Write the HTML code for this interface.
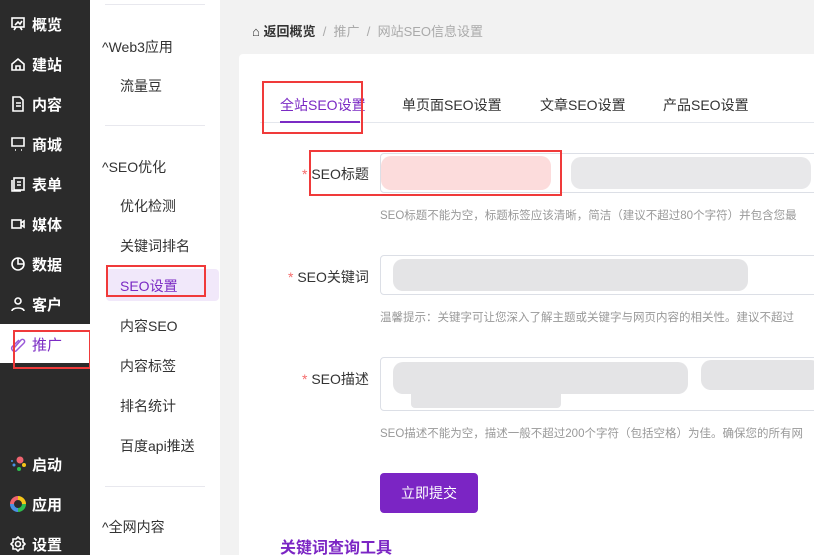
<!DOCTYPE html>
<html><head><meta charset="utf-8"><style>
*{margin:0;padding:0;box-sizing:border-box}
html,body{width:814px;height:555px;overflow:hidden}
body{background:#f2f2f2;font-family:"Liberation Sans","Noto Sans CJK SC",sans-serif;position:relative}
.side{position:absolute;left:0;top:0;width:90px;height:555px;background:#2b2b2b}
.si{position:absolute;left:10px;height:20px;color:#fff;font-size:15px;font-weight:bold;display:flex;align-items:center;gap:6px}
.si svg{width:16px;height:16px}
.act{position:absolute;left:0;top:324px;width:90px;height:39px;background:#fff}
.sub{position:absolute;left:90px;top:0;width:130px;height:555px;background:#fff}
.sh{position:absolute;left:12px;font-size:14px;color:#333}
.sl{position:absolute;left:30px;font-size:14px;color:#333}
.hr{position:absolute;left:15px;width:100px;height:1px;background:#e8e8ee}
.red{position:absolute;border:2px solid #f03a3a}
.card{position:absolute;left:239px;top:54px;width:580px;height:510px;background:#fff;border-radius:4px}
.a{position:absolute;font-size:14px;color:#333}
.ph{position:absolute;font-size:11.5px;color:#999;white-space:nowrap}
.inp{position:absolute;left:380px;width:440px;border:1px solid #dcdfe6;border-radius:4px;background:#fff;overflow:hidden}
.bl{position:absolute;background:#e4e4e6;border-radius:10px}
</style></head><body>
<div class="side">
 <div class="act"></div>
 <div class="si" style="top:14px"><svg viewBox="0 0 16 16" fill="none" stroke="#fff" stroke-width="1.6"><rect x="2" y="2" width="12" height="9"/><path d="M4 14l2-3M12 14l-2-3M5 9l3-3 2 2 2-3"/></svg>概览</div>
 <div class="si" style="top:54px"><svg viewBox="0 0 16 16" fill="none" stroke="#fff" stroke-width="1.6"><path d="M2 8l6-5 6 5v6H2z"/><path d="M6 14v-4h4v4"/></svg>建站</div>
 <div class="si" style="top:94px"><svg viewBox="0 0 16 16" fill="none" stroke="#fff" stroke-width="1.6"><path d="M3 1h7l3 3v11H3z"/><path d="M6 7h5M6 10h5"/></svg>内容</div>
 <div class="si" style="top:134px"><svg viewBox="0 0 16 16" fill="none" stroke="#fff" stroke-width="1.6"><path d="M2 2h12v8H2zM5 14h1M11 14h1"/></svg>商城</div>
 <div class="si" style="top:174px"><svg viewBox="0 0 16 16" fill="none" stroke="#fff" stroke-width="1.6"><rect x="4" y="2" width="10" height="12"/><path d="M2 4v11h9M7 6h4M7 9h4"/></svg>表单</div>
 <div class="si" style="top:214px"><svg viewBox="0 0 16 16" fill="none" stroke="#fff" stroke-width="1.6"><rect x="2" y="4" width="9" height="8"/><path d="M11 7l3-2v6l-3-2"/></svg>媒体</div>
 <div class="si" style="top:254px"><svg viewBox="0 0 16 16" fill="none" stroke="#fff" stroke-width="1.6"><circle cx="8" cy="8" r="6"/><path d="M8 2v6h6"/></svg>数据</div>
 <div class="si" style="top:294px"><svg viewBox="0 0 16 16" fill="none" stroke="#fff" stroke-width="1.6"><circle cx="8" cy="5" r="3"/><path d="M2 15c0-4 12-4 12 0"/></svg>客户</div>
 <div class="si" style="top:334px;color:#7b2bc4;font-weight:normal"><svg viewBox="0 0 16 16" fill="none" stroke="#9a5ad8" stroke-width="1.5"><path d="M4 12l7-8a2 2 0 013 3l-8 8a3 3 0 01-4-4l7-7"/></svg>推广</div>
 <div class="si" style="top:454px"><svg viewBox="0 0 16 16"><circle cx="10" cy="4" r="3.5" fill="#f06470"/><circle cx="14" cy="9" r="2" fill="#f5c518"/><circle cx="9" cy="13" r="2" fill="#2ebd4e"/><circle cx="4" cy="9" r="1.5" fill="#4a90e2"/><circle cx="2" cy="5" r="1" fill="#4a90e2"/></svg>启动</div>
 <div class="si" style="top:494px"><svg viewBox="0 0 16 16" fill="none" stroke-width="4"><path d="M2 8a6 6 0 016-6" stroke="#f06470"/><path d="M8 2a6 6 0 016 6" stroke="#f5c518"/><path d="M14 8a6 6 0 01-6 6" stroke="#2ebd4e"/><path d="M8 14a6 6 0 01-6-6" stroke="#4a90e2"/></svg>应用</div>
 <div class="si" style="top:534px"><svg viewBox="0 0 16 16" fill="none" stroke="#fff" stroke-width="1.6"><circle cx="8" cy="8" r="2.5"/><path d="M8 1l2 2 3 0 0 3 2 2-2 2 0 3-3 0-2 2-2-2-3 0 0-3-2-2 2-2 0-3 3 0z"/></svg>设置</div>
</div>
<div class="red" style="left:13px;top:330px;width:78px;height:39px"></div>
<div class="sub">
 <div class="hr" style="top:4px"></div>
 <div class="sh" style="top:37px">^Web3应用</div>
 <div class="sl" style="top:76px">流量豆</div>
 <div class="hr" style="top:125px"></div>
 <div class="sh" style="top:157px">^SEO优化</div>
 <div class="sl" style="top:196px">优化检测</div>
 <div class="sl" style="top:236px">关键词排名</div>
 <div style="position:absolute;left:16px;top:269px;width:113px;height:32px;background:#f1e8fa;border-radius:4px"></div>
 <div class="sl" style="top:276px;color:#7b2bc4">SEO设置</div>
 <div class="sl" style="top:316px">内容SEO</div>
 <div class="sl" style="top:356px">内容标签</div>
 <div class="sl" style="top:396px">排名统计</div>
 <div class="sl" style="top:436px">百度api推送</div>
 <div class="hr" style="top:486px"></div>
 <div class="sh" style="top:517px">^全网内容</div>
</div>
<div class="red" style="left:106px;top:265px;width:100px;height:32px"></div>
<div style="position:absolute;left:252px;top:21px;font-size:13px;color:#333;font-weight:bold">⌂ 返回概览 <span style="color:#aaa;font-weight:normal">&nbsp;/&nbsp; 推广 &nbsp;/&nbsp; 网站SEO信息设置</span></div>
<div class="card"></div>
<div style="position:absolute;left:260px;top:122px;width:560px;height:1px;background:#e4e7ed"></div>
<div class="a" style="left:280px;top:95px;color:#7b2bc4">全站SEO设置</div>
<div style="position:absolute;left:280px;top:121px;width:80px;height:2px;background:#7b2bc4"></div>
<div class="a" style="left:402px;top:95px">单页面SEO设置</div>
<div class="a" style="left:540px;top:95px">文章SEO设置</div>
<div class="a" style="left:663px;top:95px">产品SEO设置</div>
<div class="red" style="left:262px;top:81px;width:101px;height:53px"></div>
<div class="a" style="left:302px;top:164px"><span style="color:#f56c6c">*</span> SEO标题</div>
<div class="inp" style="top:153px;height:40px"><div class="bl" style="left:0;top:2px;width:170px;height:34px;background:#fcdcdc"></div><div class="bl" style="left:190px;top:3px;width:240px;height:32px;background:#e8e8ea"></div></div>
<div class="red" style="left:309px;top:150px;width:253px;height:46px"></div>
<div class="ph" style="left:380px;top:207px">SEO标题不能为空，标题标签应该清晰，简洁（建议不超过80个字符）并包含您最</div>
<div class="a" style="left:288px;top:267px"><span style="color:#f56c6c">*</span> SEO关键词</div>
<div class="inp" style="top:255px;height:40px"><div class="bl" style="left:12px;top:3px;width:355px;height:32px"></div></div>
<div class="ph" style="left:380px;top:309px">温馨提示：关键字可让您深入了解主题或关键字与网页内容的相关性。建议不超过</div>
<div class="a" style="left:302px;top:369px"><span style="color:#f56c6c">*</span> SEO描述</div>
<div class="inp" style="top:357px;height:54px"><div class="bl" style="left:12px;top:4px;width:295px;height:32px"></div><div class="bl" style="left:320px;top:2px;width:120px;height:30px"></div><div class="bl" style="left:30px;top:28px;width:150px;height:22px;border-radius:4px"></div></div>
<div class="ph" style="left:380px;top:425px">SEO描述不能为空，描述一般不超过200个字符（包括空格）为佳。确保您的所有网</div>
<div style="position:absolute;left:380px;top:473px;width:98px;height:40px;background:#7b25c4;border-radius:4px;color:#fff;font-size:14px;text-align:center;line-height:40px">立即提交</div>
<div style="position:absolute;left:280px;top:534px;font-size:16px;font-weight:bold;color:#7b25c4">关键词查询工具</div>
</body></html>
